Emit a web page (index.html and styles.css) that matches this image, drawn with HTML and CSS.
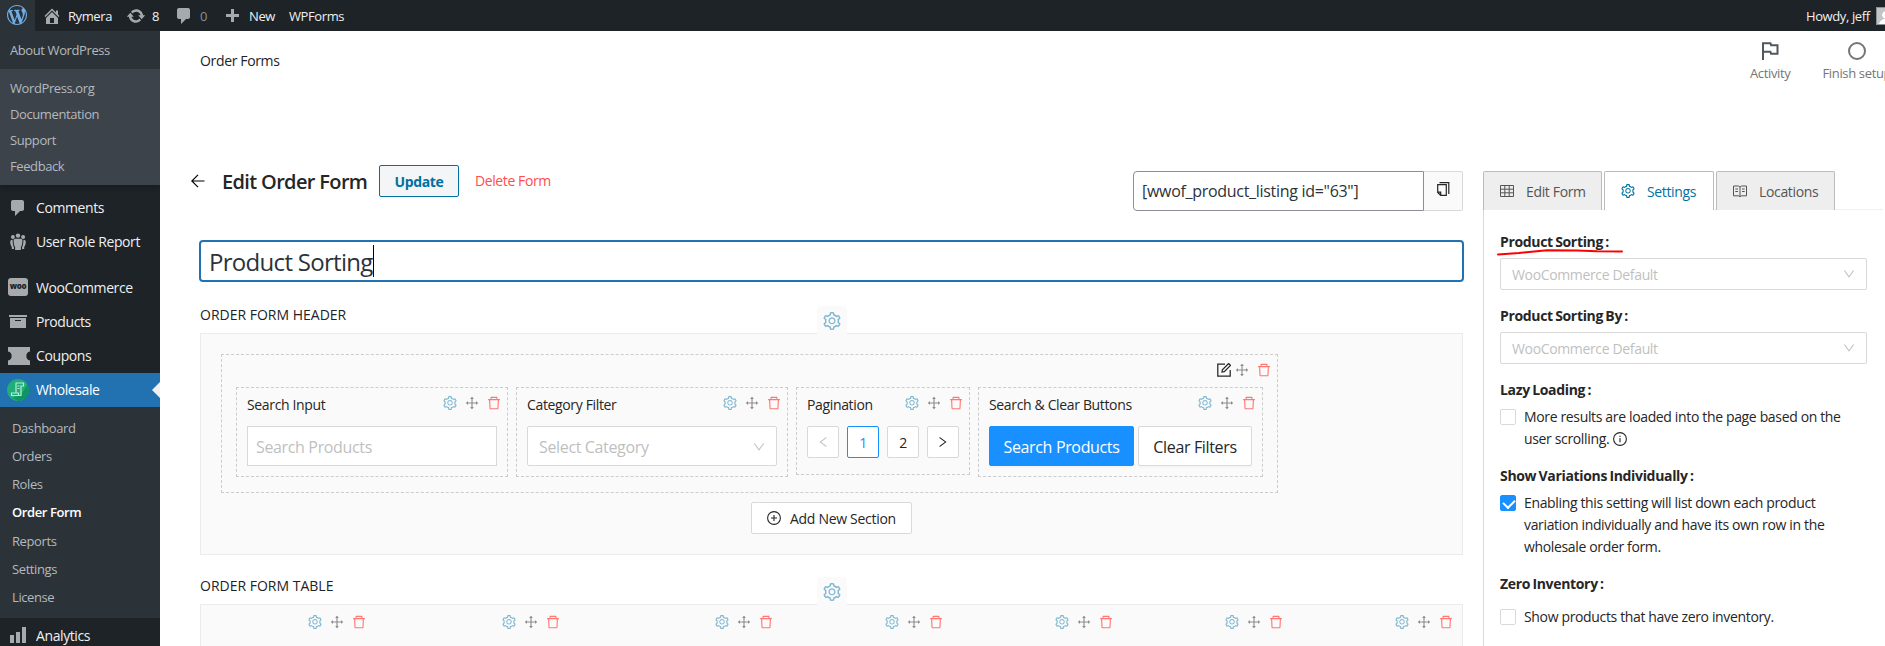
FILE: index.html
```html
<!DOCTYPE html>
<html lang="en">
<head>
    <meta charset="UTF-8">
    <meta name="viewport" content="width=device-width, initial-scale=1.0">
    <title>Edit Order Form - Rymera</title>
    <link rel="stylesheet" href="styles.css">
</head>
<body>
    <!-- Icon sprite -->
    <svg class="sprite" aria-hidden="true">
        <symbol id="i-wp" viewBox="0 0 20 20"><path d="M20 10c0-5.51-4.49-10-10-10C4.48 0 0 4.49 0 10c0 5.52 4.48 10 10 10 5.51 0 10-4.48 10-10zM7.78 15.37L4.37 6.22c.55-.02 1.17-.08 1.17-.08.5-.06.44-1.13-.06-1.11 0 0-1.45.11-2.37.11-.18 0-.37 0-.58-.01C4.12 2.69 6.87 1.11 10 1.11c2.33 0 4.45.87 6.05 2.34-.68-.11-1.65.39-1.65 1.58 0 .74.45 1.36.9 2.1.35.61.55 1.36.55 2.46 0 1.49-1.4 5-1.4 5l-3.03-8.37c.54-.02.82-.17.82-.17.5-.05.44-1.25-.06-1.22 0 0-1.44.12-2.38.12-.87 0-2.33-.12-2.33-.12-.5-.03-.56 1.2-.06 1.22l.92.08 1.26 3.41zM17.41 10c.24-.64.74-1.87.43-4.25.7 1.29 1.05 2.71 1.05 4.25 0 3.29-1.73 6.24-4.4 7.78.97-2.59 1.94-5.2 2.92-7.78zM6.1 18.09C3.12 16.65 1.11 13.53 1.11 10c0-1.3.23-2.48.72-3.59C3.25 10.3 4.67 14.2 6.1 18.09zm4.03-6.63l2.58 6.98c-.86.29-1.76.45-2.71.45-.79 0-1.57-.11-2.29-.33.81-2.38 1.62-4.74 2.42-7.1z"/></symbol>
        <symbol id="i-home" viewBox="0 0 20 20"><path d="M16 8.5l1.53 1.53-1.06 1.06L10 4.6l-6.47 6.49-1.06-1.06L10 2.5l4 4v-2h2v4zm-6-2.46l6 5.99V18H4v-5.97zM12 17v-5H8v5h4z"/></symbol>
        <symbol id="i-update" viewBox="0 0 20 20"><path d="M10.2 3.28c3.53 0 6.43 2.61 6.92 6h2.08l-3.5 4-3.5-4h2.32c-.45-1.97-2.21-3.45-4.32-3.45-1.45 0-2.73.71-3.54 1.78L4.95 5.66C6.23 4.2 8.11 3.28 10.2 3.28zm-.4 13.44c-3.52 0-6.43-2.61-6.92-6H.8l3.5-4c1.17 1.33 2.33 2.67 3.5 4H5.48c.45 1.97 2.21 3.45 4.32 3.45 1.45 0 2.73-.71 3.54-1.78l1.71 1.95c-1.28 1.46-3.15 2.38-5.25 2.38z"/></symbol>
        <symbol id="i-comment" viewBox="0 0 20 20"><path d="M5 2h9c1.1 0 2 .9 2 2v7c0 1.1-.9 2-2 2h-2l-5 5v-5H5c-1.1 0-2-.9-2-2V4c0-1.1.9-2 2-2z"/></symbol>
        <symbol id="i-plus" viewBox="0 0 20 20"><path d="M17 7v3h-5v5H9v-5H4V7h5V2h3v5h5z"/></symbol>
        <symbol id="i-groups" viewBox="0 0 20 20"><circle cx="10" cy="3.6" r="2.2"/><circle cx="4.9" cy="5" r="2"/><circle cx="15.1" cy="5" r="2"/><path d="M7.2 6.8h5.6c1 0 1.6.8 1.6 1.7 0 3-.6 5.4-1.5 6.6V18H7.1v-2.9c-.9-1.2-1.5-3.6-1.5-6.6 0-.9.6-1.7 1.6-1.7zM4.6 7.8c-1.5 0-2.4.8-2.4 2.2 0 2 .7 3.9 1.6 4.9V17H6v-1.6C5 13.5 4.6 11 4.6 7.8zM15.4 7.8c1.5 0 2.4.8 2.4 2.2 0 2-.7 3.9-1.6 4.9V17H14v-1.6c1-1.9 1.4-4.4 1.4-7.6z"/></symbol>
        <symbol id="i-archive" viewBox="0 0 20 20"><path d="M19 4v2H1V4h18zM2 7h16v10H2V7zm11 3V9H7v1h6z"/></symbol>
        <symbol id="i-coupon" viewBox="0 0 22 18"><path d="M0 0h22v4.5a4.6 4.6 0 0 0 0 9V18H0v-4.5a4.6 4.6 0 0 0 0-9z"/></symbol>
        <symbol id="i-chart" viewBox="0 0 20 20"><path d="M18 18V2h-4v16h4zm-6 0V7H8v11h4zm-6 0v-8H2v8h4z"/></symbol>
        <symbol id="i-flag" viewBox="0 0 18 18"><path d="M2 18V1.2h7.5l.6 2h6.4v8.6H10l-.6-2H2" fill="none" stroke="currentColor" stroke-width="2"/></symbol>
        <symbol id="i-gear" viewBox="64 64 896 896"><path d="M924.8 625.7l-65.5-56c3.1-19 4.7-38.4 4.7-57.8s-1.6-38.8-4.7-57.8l65.5-56a32.03 32.03 0 009.3-35.2l-.9-2.6a443.74 443.74 0 00-79.7-137.9l-1.8-2.1a32.12 32.12 0 00-35.1-9.5l-81.3 28.9c-30-24.6-63.5-44-99.7-57.6l-15.7-85a32.05 32.05 0 00-25.8-25.7l-2.7-.5c-52.1-9.4-106.9-9.4-159 0l-2.7.5a32.05 32.05 0 00-25.8 25.7l-15.8 85.4a351.86 351.86 0 00-99 57.4l-81.9-29.1a32 32 0 00-35.1 9.5l-1.8 2.1a446.02 446.02 0 00-79.7 137.9l-.9 2.6c-4.5 12.5-.8 26.5 9.3 35.2l66.3 56.6c-3.1 18.8-4.6 38-4.6 57.1 0 19.2 1.5 38.4 4.6 57.1L99 625.5a32.03 32.03 0 00-9.3 35.2l.9 2.6c18.1 50.4 44.9 96.9 79.7 137.9l1.8 2.1a32.12 32.12 0 0035.1 9.5l81.9-29.1c29.8 24.5 63.1 43.9 99 57.4l15.8 85.4a32.05 32.05 0 0025.8 25.7l2.7.5a449.4 449.4 0 00159 0l2.7-.5a32.05 32.05 0 0025.8-25.7l15.7-85a350 350 0 0099.7-57.6l81.3 28.9a32 32 0 0035.1-9.5l1.8-2.1c34.8-41.1 61.6-87.5 79.7-137.9l.9-2.6c4.5-12.3.8-26.3-9.3-35zM788.3 465.9c2.5 15.1 3.8 30.6 3.8 46.1s-1.3 31-3.8 46.1l-6.6 40.1 74.7 63.9a370.03 370.03 0 01-42.6 73.6L721 702.8l-31.4 25.8c-23.9 19.6-50.5 35-79.3 45.8l-38.1 14.3-17.9 97a377.5 377.5 0 01-85 0l-17.9-97.2-37.8-14.5c-28.5-10.8-55-26.2-78.7-45.7l-31.4-25.9-93.4 33.2c-17-22.9-31.2-47.6-42.6-73.6l75.5-64.5-6.5-40c-2.4-14.9-3.7-30.3-3.7-45.5 0-15.3 1.2-30.6 3.7-45.5l6.5-40-75.5-64.5c11.3-26.1 25.6-50.7 42.6-73.6l93.4 33.2 31.4-25.9c23.7-19.5 50.2-34.9 78.7-45.7l37.9-14.3 17.9-97.2c28.1-3.2 56.8-3.2 85 0l17.9 97 38.1 14.3c28.7 10.8 55.4 26.2 79.3 45.8l31.4 25.8 92.8-32.9c17 22.9 31.2 47.6 42.6 73.6L781.8 426l6.5 39.9zM512 326c-97.2 0-176 78.8-176 176s78.8 176 176 176 176-78.8 176-176-78.8-176-176-176zm79.2 255.2A111.6 111.6 0 01512 614c-29.9 0-58-11.7-79.2-32.8A111.6 111.6 0 01400 502c0-29.9 11.7-58 32.8-79.2C454 401.6 482.1 390 512 390c29.9 0 58 11.6 79.2 32.8A111.6 111.6 0 01624 502c0 29.9-11.7 58-32.8 79.2z"/></symbol>
        <symbol id="i-move" viewBox="64 64 896 896"><path d="M909.3 506.3L781.7 405.6a7.23 7.23 0 00-11.7 5.7V476H548V254h64.8c6 0 9.4-7 5.7-11.7L517.7 114.7a7.14 7.14 0 00-11.3 0L405.6 242.3a7.23 7.23 0 005.7 11.7H476v222H254v-64.8c0-6-7-9.4-11.7-5.7L114.7 506.3a7.14 7.14 0 000 11.3l127.5 100.8c4.7 3.7 11.7.4 11.7-5.7V548h222v222h-64.8c-6 0-9.4 7-5.7 11.7l100.8 127.5c2.9 3.7 8.5 3.7 11.3 0l100.8-127.5c3.7-4.7.4-11.7-5.7-11.7H548V548h222v64.8c0 6 7 9.4 11.7 5.7l127.5-100.8a7.3 7.3 0 00.1-11.4z"/></symbol>
        <symbol id="i-trash" viewBox="64 64 896 896"><path d="M360 184h-8c4.4 0 8-3.6 8-8v8h304v-8c0 4.4 3.6 8 8 8h-8v72h72v-80c0-35.3-28.7-64-64-64H352c-35.3 0-64 28.7-64 64v80h72v-72zm504 72H160c-17.7 0-32 14.3-32 32v32c0 4.4 3.6 8 8 8h60.4l24.7 523c1.6 34.1 29.8 61 63.9 61h454c34.2 0 62.3-26.8 63.9-61l24.7-523H888c4.4 0 8-3.6 8-8v-32c0-17.7-14.3-32-32-32zM731.3 840H292.7l-24.2-512h487l-24.2 512z"/></symbol>
        <symbol id="i-edit" viewBox="0 0 14 14"><path d="M8 1H.8v12.2h12.4V7M5 9l.4-2.3L11.6.5l1.9 1.9-6.2 6.2z" fill="none" stroke="currentColor" stroke-width="1.25"/></symbol>
        <symbol id="i-down" viewBox="64 64 896 896"><path d="M884 256h-75c-5.1 0-9.9 2.5-12.9 6.6L512 654.2 227.9 262.6c-3-4.1-7.8-6.6-12.9-6.6h-75c-6.5 0-10.3 7.4-6.5 12.7l352.6 486.1c12.8 17.6 39 17.6 51.7 0l352.6-486.1c3.9-5.3.1-12.7-6.4-12.7z"/></symbol>
        <symbol id="i-back" viewBox="0 0 14 14"><path d="M13.5 7H1M7 .8.8 7 7 13.2" fill="none" stroke="currentColor" stroke-width="1.2"/></symbol>
        <symbol id="i-copy" viewBox="0 0 14 14"><path d="M3.5.7h9.3v11.2M1.7 2.7h8.6v10.6H4.7L1.7 10.4zM1.7 10.2h3v3" fill="none" stroke="currentColor" stroke-width="1.2"/></symbol>
        <symbol id="i-add" viewBox="0 0 14 14"><path d="M7 4v6M4 7h6" stroke="currentColor" stroke-width="1.1"/><circle cx="7" cy="7" r="6.4" fill="none" stroke="currentColor" stroke-width="1.1"/></symbol>
        <symbol id="i-info" viewBox="0 0 14 14"><path d="M7 6v4.2M7 3.8V5" stroke="currentColor" stroke-width="1.1"/><circle cx="7" cy="7" r="6.4" fill="none" stroke="currentColor" stroke-width="1.1"/></symbol>
        <symbol id="i-table" viewBox="0 0 14 14"><path d="M.5 1.5h13v11H.5zM.5 5.2h13M.5 8.8h13M4.8 1.5v11M9.2 1.5v11" fill="none" stroke="currentColor"/></symbol>
        <symbol id="i-read" viewBox="0 0 14 14"><path d="M7 3 5.5 2h-5v9.800h5L7 12.700l1.500-.9h5V2h-5L7 3v9.500M2.300 5H5M2.300 7.500H5M9 5h2.700M9 7.500h2.700" fill="none" stroke="currentColor"/></symbol>
    </svg>

    <header class="adminbar">
        <div class="wp-logo"><svg><use href="#i-wp"/></svg></div>
        <div class="bar-item site"><svg><use href="#i-home"/></svg><span>Rymera</span></div>
        <div class="bar-item updates"><svg><use href="#i-update"/></svg><span>8</span></div>
        <div class="bar-item comments"><svg><use href="#i-comment"/></svg><span>0</span></div>
        <div class="bar-item new"><svg><use href="#i-plus"/></svg><span>New</span></div>
        <div class="bar-item forms"><span>WPForms</span></div>
        <div class="bar-item account"><span>Howdy, jeff</span><i class="avatar"></i></div>
    </header>

    <div class="wrap">
        <aside class="sidebar">
            <div class="wp-menu">
                <ul class="wp-menu-top"><li>About WordPress</li></ul>
                <ul class="wp-menu-links">
                    <li>WordPress.org</li>
                    <li>Documentation</li>
                    <li>Support</li>
                    <li>Feedback</li>
                </ul>
            </div>
            <ul class="menu">
                <li><svg><use href="#i-comment"/></svg>Comments</li>
                <li><svg><use href="#i-groups"/></svg>User Role Report</li>
                <li class="gap"><span class="woo">woo</span>WooCommerce</li>
                <li><svg><use href="#i-archive"/></svg>Products</li>
                <li><svg class="coupon"><use href="#i-coupon"/></svg>Coupons</li>
                <li class="current">
                    <svg class="wholesale" viewBox="0 0 22 22"><circle cx="11" cy="11" r="11" fill="#1fae79"/><path d="M11 22a11 11 0 0 0 9.5-16.5L14 16l-8 3z" fill="#0d9562"/><path d="M8.500 4h8v3H14v9.500H4.500V14H9V4.500M9 14h2.500v2.500M10.500 7h2M10.500 9.500h2" fill="none" stroke="#b9ecd6" stroke-width="1.2"/></svg>
                    Wholesale
                </li>
            </ul>
            <ul class="submenu">
                <li>Dashboard</li>
                <li>Orders</li>
                <li>Roles</li>
                <li class="active">Order Form</li>
                <li>Reports</li>
                <li>Settings</li>
                <li>License</li>
            </ul>
            <ul class="menu">
                <li><svg><use href="#i-chart"/></svg>Analytics</li>
            </ul>
        </aside>

        <main class="content">
            <div class="page-header">
                <h1>Order Forms</h1>
                <div class="activity">
                    <div class="act"><svg><use href="#i-flag"/></svg><span>Activity</span></div>
                    <div class="act"><i class="ring"></i><span>Finish setup</span></div>
                </div>
            </div>

            <div class="columns">
                <section class="editor">
                    <div class="toolbar">
                        <svg class="back"><use href="#i-back"/></svg>
                        <h2>Edit Order Form</h2>
                        <button class="update">Update</button>
                        <a class="delete">Delete Form</a>
                        <div class="shortcode">
                            <div class="code">[wwof_product_listing id="63"]</div>
                            <div class="copy"><svg><use href="#i-copy"/></svg></div>
                        </div>
                    </div>

                    <div class="form-title"><span>Product Sorting</span><i class="caret"></i></div>

                    <div class="section-head"><h3>ORDER FORM HEADER</h3><div class="gear-tab"><svg><use href="#i-gear"/></svg></div></div>
                    <div class="panel header-panel">
                        <div class="section">
                            <div class="tools section-tools">
                                <svg class="edit"><use href="#i-edit"/></svg>
                                <svg class="move"><use href="#i-move"/></svg>
                                <svg class="trash"><use href="#i-trash"/></svg>
                            </div>
                            <div class="items">
                                <div class="item wide">
                                    <div class="item-head"><span>Search Input</span><div class="tools"><svg class="gear"><use href="#i-gear"/></svg><svg class="move"><use href="#i-move"/></svg><svg class="trash"><use href="#i-trash"/></svg></div></div>
                                    <div class="field"><span>Search Products</span></div>
                                </div>
                                <div class="item wide">
                                    <div class="item-head"><span>Category Filter</span><div class="tools"><svg class="gear"><use href="#i-gear"/></svg><svg class="move"><use href="#i-move"/></svg><svg class="trash"><use href="#i-trash"/></svg></div></div>
                                    <div class="field select"><span>Select Category</span><svg><use href="#i-down"/></svg></div>
                                </div>
                                <div class="item pager">
                                    <div class="item-head"><span>Pagination</span><div class="tools"><svg class="gear"><use href="#i-gear"/></svg><svg class="move"><use href="#i-move"/></svg><svg class="trash"><use href="#i-trash"/></svg></div></div>
                                    <div class="pages">
                                        <div class="page off"><svg class="prev"><use href="#i-down"/></svg></div>
                                        <div class="page on">1</div>
                                        <div class="page">2</div>
                                        <div class="page"><svg class="next"><use href="#i-down"/></svg></div>
                                    </div>
                                </div>
                                <div class="item">
                                    <div class="item-head"><span>Search &amp; Clear Buttons</span><div class="tools"><svg class="gear"><use href="#i-gear"/></svg><svg class="move"><use href="#i-move"/></svg><svg class="trash"><use href="#i-trash"/></svg></div></div>
                                    <div class="buttons">
                                        <button class="btn primary">Search Products</button>
                                        <button class="btn">Clear Filters</button>
                                    </div>
                                </div>
                            </div>
                        </div>
                        <button class="add"><svg><use href="#i-add"/></svg><span>Add New Section</span></button>
                    </div>

                    <div class="section-head table-head"><h3>ORDER FORM TABLE</h3><div class="gear-tab"><svg><use href="#i-gear"/></svg></div></div>
                    <div class="panel table-panel">
                        <div class="tools"><svg class="gear"><use href="#i-gear"/></svg><svg class="move"><use href="#i-move"/></svg><svg class="trash"><use href="#i-trash"/></svg></div>
                        <div class="tools"><svg class="gear"><use href="#i-gear"/></svg><svg class="move"><use href="#i-move"/></svg><svg class="trash"><use href="#i-trash"/></svg></div>
                        <div class="tools"><svg class="gear"><use href="#i-gear"/></svg><svg class="move"><use href="#i-move"/></svg><svg class="trash"><use href="#i-trash"/></svg></div>
                        <div class="tools"><svg class="gear"><use href="#i-gear"/></svg><svg class="move"><use href="#i-move"/></svg><svg class="trash"><use href="#i-trash"/></svg></div>
                        <div class="tools"><svg class="gear"><use href="#i-gear"/></svg><svg class="move"><use href="#i-move"/></svg><svg class="trash"><use href="#i-trash"/></svg></div>
                        <div class="tools"><svg class="gear"><use href="#i-gear"/></svg><svg class="move"><use href="#i-move"/></svg><svg class="trash"><use href="#i-trash"/></svg></div>
                        <div class="tools"><svg class="gear"><use href="#i-gear"/></svg><svg class="move"><use href="#i-move"/></svg><svg class="trash"><use href="#i-trash"/></svg></div>
                    </div>
                </section>

                <aside class="options">
                    <nav class="tabs">
                        <a class="tab"><svg><use href="#i-table"/></svg><span>Edit Form</span></a>
                        <a class="tab selected"><svg><use href="#i-gear"/></svg><span>Settings</span></a>
                        <a class="tab"><svg><use href="#i-read"/></svg><span>Locations</span></a>
                    </nav>
                    <div class="settings">
                        <div class="setting">
                            <h4><span>Product Sorting</span> :</h4>
                            <svg class="mark" viewBox="0 0 127 8"><path d="M1 6.5 22 5 50 2.2 80 2.4 100 3.2 125 3.5" fill="none" stroke="#f00" stroke-width="2" stroke-linecap="round"/></svg>
                            <div class="dropdown"><span>WooCommerce Default</span><svg><use href="#i-down"/></svg></div>
                        </div>
                        <div class="setting">
                            <h4><span>Product Sorting By</span> :</h4>
                            <div class="dropdown"><span>WooCommerce Default</span><svg><use href="#i-down"/></svg></div>
                        </div>
                        <div class="setting lazy">
                            <h4><span>Lazy Loading</span> :</h4>
                            <div class="check"><i class="box"></i><p>More results are loaded into the page based on the<br>user scrolling. <svg><use href="#i-info"/></svg></p></div>
                        </div>
                        <div class="setting variations">
                            <h4><span>Show Variations Individually</span> :</h4>
                            <div class="check"><i class="box checked"></i><p>Enabling this setting will list down each product<br>variation individually and have its own row in the<br>wholesale order form.</p></div>
                        </div>
                        <div class="setting inventory">
                            <h4><span>Zero Inventory</span> :</h4>
                            <div class="check"><i class="box"></i><p>Show products that have zero inventory.</p></div>
                        </div>
                    </div>
                </aside>
            </div>
        </main>
    </div>
</body>
</html>
```
FILE: styles.css
```css
* {
    box-sizing: border-box;
}
body {
    font-family: "Segoe UI", "Open Sans", "Noto Sans", sans-serif;
    font-size: 14px;
    letter-spacing: -0.35px;
    color: #262626;
    background: #fff;
    margin: 0;
    height: 646px;
    overflow: hidden;
}
h1, h2, h3, h4, p, ul {
    margin: 0;
    padding: 0;
    font-weight: 400;
}
ul {
    list-style: none;
}
svg {
    display: block;
    flex: none;
    fill: currentColor;
}
button {
    font-family: inherit;
    letter-spacing: inherit;
    padding: 0;
}
.sprite {
    display: none;
}

/* Admin bar */
.adminbar {
    display: flex;
    height: 31px;
    background: #1d2327;
    color: #f0f0f1;
    font-size: 13px;
    letter-spacing: -0.4px;
}
.wp-logo {
    width: 35px;
    padding: 5px 0 0 7px;
    background: #2c3338;
    color: #72aee6;
}
.wp-logo svg {
    width: 20px;
    height: 20px;
}
.bar-item {
    display: flex;
    align-items: center;
    white-space: nowrap;
}
.bar-item svg {
    width: 20px;
    height: 20px;
    color: #a7aaad;
}
.site {
    width: 91px;
    padding-left: 7px;
    gap: 6px;
}
.updates {
    width: 48px;
    gap: 6px;
}
.comments {
    width: 48px;
    gap: 6px;
    color: #8c8f94;
}
.new {
    width: 67px;
    gap: 7px;
}
.new svg {
    margin-top: 3px;
}
.account {
    margin-left: auto;
    gap: 6px;
    width: 79px;
    overflow: hidden;
}
.avatar {
    flex: none;
    width: 18px;
    height: 18px;
    border: 1px solid #8c8f94;
    background: radial-gradient(circle at 9px 7px, #fff 3.5px, transparent 4px), radial-gradient(circle at 9px 18px, #fff 7px, transparent 7.5px), #c3c4c7;
}

/* Sidebar */
.wrap {
    display: flex;
    height: 615px;
}
.sidebar {
    width: 160px;
    flex: none;
    background: #1d2327;
    letter-spacing: -0.4px;
    overflow: hidden;
}
.wp-menu {
    color: #b4b9be;
    font-size: 13px;
    line-height: 26px;
    background: #3c434a;
    box-shadow: 0 3px 5px rgba(0, 0, 0, 0.2);
    margin-bottom: 5.7px;
}
.wp-menu ul {
    padding: 6px 10px;
}
.wp-menu-top {
    background: #2c3338;
}
.menu li {
    display: flex;
    align-items: center;
    height: 34.2px;
    padding-left: 8px;
    gap: 8px;
    color: #f0f0f1;
}
.menu li svg {
    width: 20px;
    height: 20px;
    color: #a7aaad;
}
.menu .gap {
    margin-top: 11px;
}
.menu li .coupon {
    width: 22px;
    height: 18px;
    margin-right: -2px;
}
.woo {
    width: 20px;
    height: 18px;
    border-radius: 3px;
    background: #a7aaad;
    color: #1d2327;
    font-size: 8px;
    font-weight: 800;
    line-height: 15px;
    text-align: center;
}
.menu .current {
    background: #2271b1;
    color: #fff;
    padding-left: 7px;
    gap: 7px;
}
.menu li .wholesale {
    width: 22px;
    height: 22px;
}
.current::after {
    content: "";
    margin-left: auto;
    border: 8px solid transparent;
    border-right-color: #f0f0f1;
    border-left: 0;
}
.submenu {
    background: #2c3338;
    padding: 7px 12px;
    color: #b4b9be;
    font-size: 13px;
    line-height: 28.2px;
}
.submenu .active {
    color: #fff;
    font-weight: 600;
}

/* Page header */
.content {
    flex: 1;
    min-width: 0;
    overflow: hidden;
}
.page-header {
    display: flex;
    height: 140px;
    justify-content: space-between;
}
.page-header h1 {
    padding: 20px 0 0 40px;
    font-size: 14px;
    line-height: 20px;
    color: #1d2327;
}
.activity {
    display: flex;
    width: 135px;
    gap: 32px;
    padding-top: 11px;
    color: #757575;
    font-size: 13px;
    white-space: nowrap;
}
.act {
    display: flex;
    flex-direction: column;
    align-items: center;
    gap: 4px;
    flex: none;
}
.act svg {
    width: 18px;
    height: 18px;
    color: #50575e;
}
.ring {
    width: 18px;
    height: 18px;
    border: 2px solid #757575;
    border-radius: 50%;
}

/* Editor */
.columns {
    display: flex;
    height: 475px;
}
.editor {
    width: 1304px;
    padding-left: 40px;
    flex: none;
}
.toolbar {
    display: flex;
    height: 40px;
    margin: 0 0 29px -9px;
    width: 1272px;
}
.back {
    width: 14px;
    height: 14px;
    margin-top: 3px;
    color: #000;
}
.toolbar h2 {
    width: 157px;
    margin-left: 17px;
    margin-top: -3px;
    font-size: 20px;
    line-height: 28px;
    font-weight: 600;
    letter-spacing: -0.65px;
    white-space: nowrap;
}
.update {
    width: 80px;
    height: 32px;
    margin-top: -6px;
    border: 1px solid #0071a1;
    border-radius: 2px;
    background: #f3f5f6;
    color: #0071a1;
    font-size: 14px;
    font-weight: 700;
}
.delete {
    margin-left: 16px;
    line-height: 20px;
    letter-spacing: -0.4px;
    color: #ff4d4f;
}
.shortcode {
    display: flex;
    margin-left: auto;
    width: 330px;
    height: 40px;
}
.code {
    width: 291px;
    border: 1px solid #8c8f94;
    border-radius: 4px 0 0 4px;
    padding-left: 8px;
    font-size: 16px;
    letter-spacing: -0.3px;
    line-height: 38px;
    color: #2c3338;
}
.copy {
    flex: 1;
    border: 1px solid #d9d9d9;
    border-left: 0;
    border-radius: 0 2px 2px 0;
    background: #fafafa;
    padding: 10px 0 0 12px;
}
.copy svg {
    width: 14px;
    height: 14px;
}
.form-title {
    display: flex;
    align-items: center;
    width: 1265px;
    height: 42px;
    margin-left: -1px;
    border: 2px solid #2271b1;
    border-radius: 4px;
    padding-left: 8px;
    font-size: 24px;
    letter-spacing: -0.7px;
    color: #2c3338;
}
.caret {
    width: 1px;
    height: 32px;
    background: #000;
}
.section-head {
    display: flex;
    justify-content: space-between;
    width: 1263px;
    height: 51px;
}
.section-head h3 {
    padding-top: 22px;
    font-size: 14px;
    letter-spacing: 0;
    line-height: 22px;
    color: #1d2327;
}
.gear-tab {
    width: 30px;
    height: 29px;
    margin: 24px 616px 0 0;
    padding: 6px;
    border-radius: 4px 4px 0 0;
    background: #fafafa;
    color: #7fb8d0;
    z-index: 1;
}
.gear-tab svg {
    width: 18px;
    height: 18px;
}
.panel {
    width: 1263px;
    border: 1px solid #ebebeb;
    background: #fafafa;
}
.header-panel {
    height: 222px;
    padding: 20px;
}
.section {
    width: 1057px;
    height: 139px;
    border: 1px dashed #ccc;
    padding: 0 14px;
}
.tools {
    display: flex;
    gap: 8px;
}
.tools svg {
    width: 14px;
    height: 14px;
}
.gear {
    color: #7fb8d0;
}
.move {
    color: #8c8c8c;
}
.trash {
    color: #ff7875;
}
.section-tools {
    justify-content: flex-end;
    height: 32px;
    padding: 8px 0 0;
    margin-right: -8px;
}
.section-tools .edit {
    margin-right: -4px;
}
.items {
    display: flex;
    align-items: flex-start;
    gap: 8px;
}
.item {
    width: 285px;
    height: 90px;
    border: 1px dashed #ccc;
    padding: 8px 10px 0;
}
.item.wide {
    width: 272px;
}
.item.pager {
    width: 174px;
    height: 88px;
}
.item-head {
    display: flex;
    justify-content: space-between;
    height: 30px;
    line-height: 18px;
    white-space: nowrap;
    margin-right: -4px;
}
.field {
    display: flex;
    align-items: center;
    justify-content: space-between;
    height: 40px;
    border: 1px solid #d9d9d9;
    background: #fff;
    color: #bfbfbf;
    padding: 1px 8px 0;
    font-size: 16px;
}
.field.select {
    padding: 1px 11px 0;
    border-radius: 2px;
}
.field svg, .dropdown svg {
    width: 12px;
    height: 12px;
}
.pages {
    display: flex;
    gap: 8px;
}
.page {
    display: flex;
    align-items: center;
    justify-content: center;
    width: 32px;
    height: 32px;
    border: 1px solid #d9d9d9;
    border-radius: 2px;
    background: #fff;
}
.page svg {
    width: 12px;
    height: 12px;
}
.page.off {
    color: #bfbfbf;
}
.page.on {
    border-color: #1890ff;
    color: #1890ff;
}
.prev {
    transform: rotate(90deg);
}
.next {
    transform: rotate(-90deg);
}
.buttons {
    display: flex;
    gap: 4px;
}
.btn {
    width: 114px;
    height: 40px;
    border: 1px solid #d9d9d9;
    border-radius: 2px;
    background: #fff;
    color: #262626;
    font-size: 16px;
    padding-top: 2px;
    box-shadow: 0 2px 0 rgba(0, 0, 0, 0.015);
}
.btn.primary {
    width: 145px;
    border-color: #1890ff;
    background: #1890ff;
    color: #fff;
}
.add {
    display: flex;
    align-items: center;
    gap: 9px;
    width: 161px;
    height: 32px;
    margin: 9px 0 0 530px;
    padding-left: 15px;
    border: 1px solid #d9d9d9;
    border-radius: 2px;
    background: #fff;
    color: #262626;
    font-size: 14px;
    letter-spacing: -0.3px;
}
.add svg {
    width: 14px;
    height: 14px;
}
.table-head {
    height: 49px;
}
.table-head h3 {
    padding-top: 20px;
}
.table-head .gear-tab {
    margin-top: 22px;
}
.table-panel {
    display: grid;
    grid-template-columns: 165px 194px 213px 170px 170px 170px 170px;
    height: 60px;
    padding-top: 10px;
}
.table-panel .tools {
    justify-content: flex-end;
}

/* Options panel */
.options {
    width: 399px;
    flex: none;
    margin-left: 19px;
}
.tabs {
    display: flex;
    gap: 2px;
    height: 39px;
    width: 400px;
    background: linear-gradient(#f0f0f0, #f0f0f0) 0 38px / 400px 1px no-repeat;
}
.tab {
    display: flex;
    align-items: center;
    gap: 12px;
    width: 119px;
    border: 1px solid #bbb;
    border-bottom: 0;
    border-radius: 2px 2px 0 0;
    background: #eee;
    padding-left: 16px;
    color: #555;
}
.tab.selected {
    width: 110px;
    background: #fff;
    color: #0071a1;
}
.tab svg {
    width: 14px;
    height: 14px;
}
.settings {
    height: 440px;
    border-left: 1px solid #d9d9d9;
    padding: 21px 0 0 16px;
}
.setting {
    position: relative;
    height: 74px;
}
.setting h4 {
    font-weight: 700;
    line-height: 22px;
    letter-spacing: -0.33px;
    word-spacing: -1px;
}
.dropdown {
    display: flex;
    align-items: center;
    justify-content: space-between;
    width: 367px;
    height: 32px;
    margin-top: 5px;
    border: 1px solid #d9d9d9;
    border-radius: 2px;
    padding: 0 11px;
    color: #bfbfbf;
}
/* hand drawn underline over the label */
.mark {
    position: absolute;
    left: -3px;
    top: 17px;
    width: 127px;
    height: 8px;
}
.lazy {
    height: 86px;
}
.variations {
    height: 108px;
}
.check {
    display: flex;
    gap: 8px;
    margin-top: 5px;
    line-height: 22px;
    letter-spacing: -0.35px;
    white-space: nowrap;
}
.inventory .check {
    margin-top: 11px;
}
.check p svg {
    display: inline-block;
    width: 14px;
    height: 14px;
    vertical-align: -2px;
}
.box {
    flex: none;
    width: 16px;
    height: 16px;
    margin-top: 3px;
    border: 1px solid #d9d9d9;
    border-radius: 2px;
}
.box.checked {
    border-color: #1890ff;
    background: #1890ff;
}
.box.checked::after {
    content: "";
    display: block;
    width: 6px;
    height: 9px;
    margin: 1px 0 0 4px;
    border: solid #fff;
    border-width: 0 2px 2px 0;
    transform: rotate(45deg);
}
```
